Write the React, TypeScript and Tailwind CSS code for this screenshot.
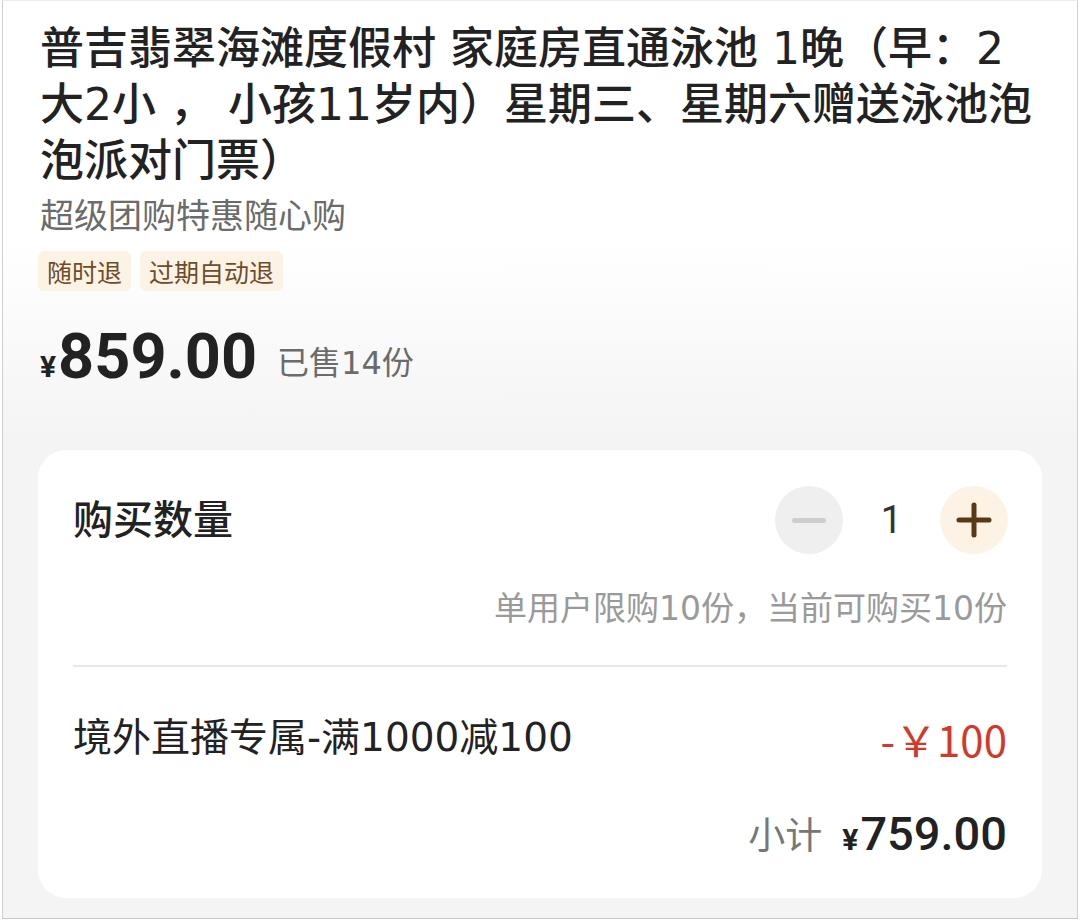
import React, { useState } from 'react';

const body = "font-['DejaVu_Sans','Noto_Sans_CJK_SC',sans-serif]";
const num = "font-['Roboto','Noto_Sans_CJK_SC',sans-serif]";
const cjk = "font-['Noto_Sans_CJK_SC',sans-serif]";

const Tag: React.FC<{ children: React.ReactNode }> = ({ children }) => (
    <span className={`${cjk} h-[40px] px-[9px] flex items-center rounded-[6px] bg-[#fcf3e5] text-[#6e4c2c] text-[25px] leading-none`}>
        {children}
    </span>
);

export default function App() {
    const [count, setCount] = useState(1);

    return (
        <div className={`w-[1080px] h-[923px] bg-white ${body}`}>
            <div className="ml-[2px] w-[1076px] h-[919px] border border-t-[#ececec] border-x-[#cfcfcf] border-b-[#c8c8c8] bg-[linear-gradient(to_bottom,#ffffff_0px,#ffffff_240px,#f4f4f4_440px)] pl-[35px] pt-[20px]">
                <h1 className="w-[1000px] ml-[2px] text-[44px] leading-[56px] font-medium text-[#222222]">
                    普吉翡翠海滩度假村 家庭房直通泳池 1晚（早：2大2小 ， 小孩11岁内）星期三、星期六赠送泳池泡泡派对门票）
                </h1>
                <p className="ml-[2px] mt-[2px] text-[34px] leading-[50px] text-[#6b6b6b]">超级团购特惠随心购</p>
                <div className="mt-[10px] flex gap-[9px]">
                    <Tag>随时退</Tag>
                    <Tag>过期自动退</Tag>
                </div>
                <div className="mt-[30px] h-[70px] ml-[2px] flex items-center">
                    <span className={`${num} text-[30px] font-bold text-[#222222] mt-[20px]`}>¥</span>
                    <span className={`${num} text-[63px] font-bold text-[#222222] leading-none ml-[2px]`}>859.00</span>
                    <span className="ml-[20px] mt-[14px] text-[32px] text-[#6b6b6b]">已售14份</span>
                </div>

                <div className="mt-[59px] w-[1004px] bg-white rounded-[28px] px-[35px] pt-[36px] pb-[34px]">
                    <div className="flex items-center justify-between h-[68px]">
                        <span className="text-[40px] font-medium text-[#222222]">购买数量</span>
                        <div className="flex items-center mr-[-1px]">
                            <button
                                onClick={() => setCount(c => Math.max(1, c - 1))}
                                className="w-[68px] h-[68px] rounded-full bg-[#efefef] flex items-center justify-center"
                            >
                                <span className="block w-[34px] h-[5px] rounded-full bg-[#cdcdcd]" />
                            </button>
                            <span className={`${num} w-[97px] text-center text-[38px] text-[#333333]`}>{count}</span>
                            <button
                                onClick={() => setCount(c => Math.min(10, c + 1))}
                                className="w-[68px] h-[68px] rounded-full bg-[#fdf3e4] flex items-center justify-center"
                            >
                                <svg width="36" height="36" viewBox="0 0 36 36" fill="none" stroke="#5a3916" strokeWidth="5" strokeLinecap="round">
                                    <path d="M18 3v30M3 18h30" />
                                </svg>
                            </button>
                        </div>
                    </div>
                    <p className="mt-[33px] text-right text-[33px] leading-[44px] text-[#9a9a9a]">单用户限购10份，当前可购买10份</p>
                    <div className="mt-[34px] h-[2px] bg-[#e8e8e8]" />
                    <div className="mt-[46px] flex items-center justify-between h-[50px]">
                        <span className="text-[39px] text-[#222222]">境外直播专属-满1000减100</span>
                        <span className={`${cjk} text-[42px] text-[#d03a2c]`}>-￥100</span>
                    </div>
                    <div className="mt-[41px] flex items-center justify-end h-[60px]">
                        <span className={`${cjk} text-[37px] text-[#777777]`}>小计</span>
                        <span className={`${num} ml-[20px] mt-[10px] text-[30px] font-bold text-[#222222]`}>¥</span>
                        <span className={`${num} ml-[2px] text-[47px] font-medium text-[#222222]`}>759.00</span>
                    </div>
                </div>
            </div>
        </div>
    );
}
